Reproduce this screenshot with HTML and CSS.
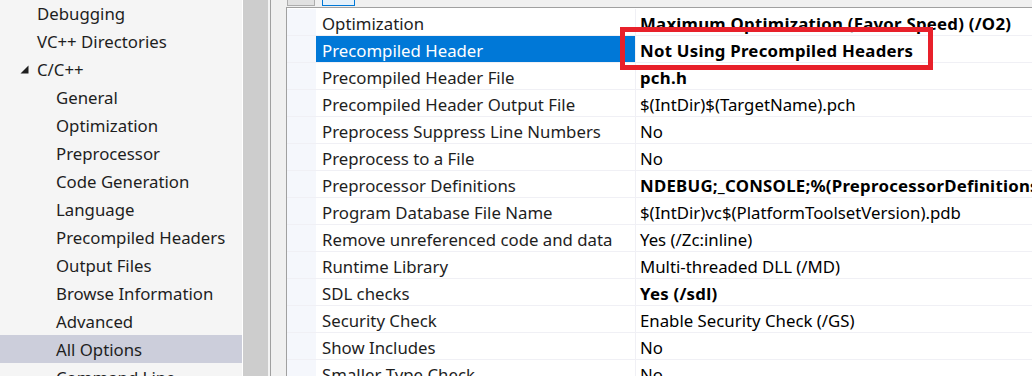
FILE: index.html
```html
<!DOCTYPE html>
<html>
<head>
<meta charset="utf-8">
<link rel="stylesheet" href="styles.css">
</head>
<body>
<div class="window">
  <div class="sidebar">
    <ul class="tree">
      <li class="node lvl1">Debugging</li>
      <li class="node lvl1">VC++ Directories</li>
      <li class="node lvl1 expanded"><svg class="twisty" width="9" height="9" viewBox="0 0 9 9"><polygon points="8.5,0.5 8.5,8.5 0.5,8.5" fill="#1e1e1e"/></svg>C/C++</li>
      <li class="node lvl2">General</li>
      <li class="node lvl2">Optimization</li>
      <li class="node lvl2">Preprocessor</li>
      <li class="node lvl2">Code Generation</li>
      <li class="node lvl2">Language</li>
      <li class="node lvl2">Precompiled Headers</li>
      <li class="node lvl2">Output Files</li>
      <li class="node lvl2">Browse Information</li>
      <li class="node lvl2">Advanced</li>
      <li class="node lvl2 selected">All Options</li>
      <li class="node lvl2">Command Line</li>
    </ul>
  </div>
  <div class="scrolltrack"></div>
  <div class="gap"></div>
  <div class="splitter"></div>
  <div class="main">
    <div class="toolbar">
      <span class="tbtn"></span>
      <span class="tbtn active"></span>
    </div>
    <div class="grid">
      <div class="row"><div class="rh"></div><div class="name">Optimization</div><div class="val bold">Maximum Optimization (Favor Speed) (/O2)</div></div>
      <div class="row sel"><div class="rh"></div><div class="name">Precompiled Header</div><div class="val bold">Not Using Precompiled Headers</div></div>
      <div class="row"><div class="rh"></div><div class="name">Precompiled Header File</div><div class="val bold">pch.h</div></div>
      <div class="row"><div class="rh"></div><div class="name">Precompiled Header Output File</div><div class="val">$(IntDir)$(TargetName).pch</div></div>
      <div class="row"><div class="rh"></div><div class="name">Preprocess Suppress Line Numbers</div><div class="val">No</div></div>
      <div class="row"><div class="rh"></div><div class="name">Preprocess to a File</div><div class="val">No</div></div>
      <div class="row"><div class="rh"></div><div class="name">Preprocessor Definitions</div><div class="val bold">NDEBUG;_CONSOLE;%(PreprocessorDefinitions)</div></div>
      <div class="row"><div class="rh"></div><div class="name">Program Database File Name</div><div class="val">$(IntDir)vc$(PlatformToolsetVersion).pdb</div></div>
      <div class="row"><div class="rh"></div><div class="name">Remove unreferenced code and data</div><div class="val">Yes (/Zc:inline)</div></div>
      <div class="row"><div class="rh"></div><div class="name">Runtime Library</div><div class="val">Multi-threaded DLL (/MD)</div></div>
      <div class="row"><div class="rh"></div><div class="name">SDL checks</div><div class="val bold">Yes (/sdl)</div></div>
      <div class="row"><div class="rh"></div><div class="name">Security Check</div><div class="val">Enable Security Check (/GS)</div></div>
      <div class="row"><div class="rh"></div><div class="name">Show Includes</div><div class="val">No</div></div>
      <div class="row"><div class="rh"></div><div class="name">Smaller Type Check</div><div class="val">No</div></div>
    </div>
  </div>
  <div class="highlight"></div>
</div>
</body>
</html>
```

FILE: styles.css
```css
* { box-sizing: border-box; }
html, body { margin: 0; padding: 0; }
body {
  font-family: "Noto Sans", "Open Sans", sans-serif;
  font-size: 16.8px;
  color: #1e1e1e;
  background: #f0f0f0;
}
.window {
  position: relative;
  display: flex;
  width: 1032px;
  height: 376px;
  overflow: hidden;
}
.sidebar {
  width: 243px;
  flex: none;
  background: #f5f5f5;
  border-right: 1px solid #ffffff;
}
.tree {
  list-style: none;
  margin: -1px 0 0 0;
  padding: 0;
}
.node {
  height: 28px;
  display: flex;
  align-items: center;
  white-space: nowrap;
}
.lvl1 { padding-left: 37px; }
.lvl2 { padding-left: 56px; }
.expanded { padding-left: 20px; }
.twisty { margin-right: 8px; }
.selected { background: #cccedb; }
.scrolltrack {
  width: 25px;
  flex: none;
  background: #cdcdcd;
}
.gap {
  width: 2px;
  flex: none;
  background: #f3f3f3;
}
.splitter {
  width: 1px;
  flex: none;
  background: #a0a0a0;
}
.main {
  flex: 1;
  padding-left: 15px;
  background: #f0f0f0;
  min-width: 0;
}
.toolbar {
  height: 7px;
  display: flex;
  gap: 7px;
  padding-left: 1px;
  align-items: flex-end;
}
.tbtn {
  width: 28px;
  height: 12px;
  margin-bottom: 1px;
  background: #e1e1e1;
  border: 1px solid #adadad;
}
.tbtn.active {
  width: 33px;
  background: #e5f1fb;
  border-color: #0078d7;
}
.grid {
  border-top: 1px solid #a0a0a0;
  border-left: 1px solid #a0a0a0;
  background: #ffffff;
  padding-top: 1px;
  height: 369px;
}
.row {
  display: flex;
  height: 27px;
  border-bottom: 1px solid #f0f0f5;
}
.rh {
  width: 29px;
  flex: none;
  background: #f5f7fc;
}
.name {
  width: 320px;
  flex: none;
  padding-left: 6px;
  padding-top: 2px;
  display: flex;
  align-items: center;
  white-space: nowrap;
  border-right: 1px solid #f0f0f5;
  color: #1e1e1e;
}
.val {
  flex: 1;
  padding-left: 4px;
  padding-top: 2px;
  display: flex;
  align-items: center;
  white-space: nowrap;
  overflow: hidden;
  color: #000000;
}
.bold { font-weight: 700; letter-spacing: 0.25px; }
.row.sel .name {
  background: #0078d7;
  color: #ffffff;
}
.highlight {
  position: absolute;
  left: 620px;
  top: 27px;
  width: 313px;
  height: 43px;
  border: 5px solid #e8202a;
}
```
